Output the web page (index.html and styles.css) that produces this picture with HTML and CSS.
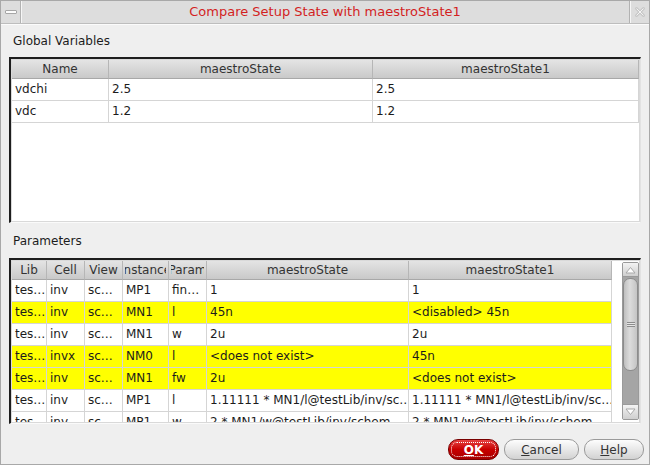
FILE: index.html
```html
<!DOCTYPE html>
<html>
<head>
<meta charset="utf-8">
<link rel="stylesheet" href="styles.css">
</head>
<body>
<div class="window">
  <div class="titlebar">
    <div class="tb-btn tb-min"><span class="min-icon"></span></div>
    <div class="tb-title">Compare Setup State with maestroState1</div>
    <div class="tb-btn tb-close">
      <svg width="12" height="12" viewBox="0 0 12 12"><path d="M2.5 2.5 L9.5 9.5 M9.5 2.5 L2.5 9.5" stroke="#c8c8c8" stroke-width="3" stroke-linecap="round" fill="none"/><path d="M2.5 2.5 L9.5 9.5 M9.5 2.5 L2.5 9.5" stroke="#f4f4f4" stroke-width="1" fill="none"/></svg>
    </div>
  </div>

  <div class="label label-1">Global Variables</div>
  <div class="frame">
    <div class="viewport">
      <div class="row">
        <div class="hc c-name"><div class="clip"><span>Name</span></div></div>
        <div class="hc c-ms"><div class="clip"><span>maestroState</span></div></div>
        <div class="hc c-ms1"><div class="clip"><span>maestroState1</span></div></div>
      </div>
      <div class="row">
        <div class="dc c-name">vdchi</div>
        <div class="dc c-ms">2.5</div>
        <div class="dc c-ms1">2.5</div>
      </div>
      <div class="row">
        <div class="dc c-name">vdc</div>
        <div class="dc c-ms">1.2</div>
        <div class="dc c-ms1">1.2</div>
      </div>
    </div>
  </div>

  <div class="label label-2">Parameters</div>
  <div class="frame">
    <div class="viewport split">
      <div class="grid-area">
        <div class="row">
          <div class="hc p-lib"><div class="clip"><span>Lib</span></div></div>
          <div class="hc p-cell"><div class="clip"><span>Cell</span></div></div>
          <div class="hc p-view"><div class="clip"><span>View</span></div></div>
          <div class="hc p-inst"><div class="clip"><span>Instance</span></div></div>
          <div class="hc p-param"><div class="clip"><span>Param</span></div></div>
          <div class="hc p-ms"><div class="clip"><span>maestroState</span></div></div>
          <div class="hc p-ms1"><div class="clip"><span>maestroState1</span></div></div>
        </div>
        <div class="row">
          <div class="dc p-lib">tes…</div><div class="dc p-cell">inv</div><div class="dc p-view">sc…</div><div class="dc p-inst">MP1</div><div class="dc p-param">fin…</div><div class="dc p-ms">1</div><div class="dc p-ms1">1</div>
        </div>
        <div class="row hl">
          <div class="dc p-lib">tes…</div><div class="dc p-cell">inv</div><div class="dc p-view">sc…</div><div class="dc p-inst">MN1</div><div class="dc p-param">l</div><div class="dc p-ms">45n</div><div class="dc p-ms1">&lt;disabled&gt; 45n</div>
        </div>
        <div class="row">
          <div class="dc p-lib">tes…</div><div class="dc p-cell">inv</div><div class="dc p-view">sc…</div><div class="dc p-inst">MN1</div><div class="dc p-param">w</div><div class="dc p-ms">2u</div><div class="dc p-ms1">2u</div>
        </div>
        <div class="row hl">
          <div class="dc p-lib">tes…</div><div class="dc p-cell">invx</div><div class="dc p-view">sc…</div><div class="dc p-inst">NM0</div><div class="dc p-param">l</div><div class="dc p-ms">&lt;does not exist&gt;</div><div class="dc p-ms1">45n</div>
        </div>
        <div class="row hl">
          <div class="dc p-lib">tes…</div><div class="dc p-cell">inv</div><div class="dc p-view">sc…</div><div class="dc p-inst">MN1</div><div class="dc p-param">fw</div><div class="dc p-ms">2u</div><div class="dc p-ms1">&lt;does not exist&gt;</div>
        </div>
        <div class="row">
          <div class="dc p-lib">tes…</div><div class="dc p-cell">inv</div><div class="dc p-view">sc…</div><div class="dc p-inst">MP1</div><div class="dc p-param">l</div><div class="dc p-ms">1.11111 * MN1/l@testLib/inv/sc…</div><div class="dc p-ms1">1.11111 * MN1/l@testLib/inv/sc…</div>
        </div>
        <div class="row">
          <div class="dc p-lib">tes…</div><div class="dc p-cell">inv</div><div class="dc p-view">sc…</div><div class="dc p-inst">MP1</div><div class="dc p-param">w</div><div class="dc p-ms">2 * MN1/w@testLib/inv/schem…</div><div class="dc p-ms1">2 * MN1/w@testLib/inv/schem…</div>
        </div>
      </div>
      <div class="sb-gap"></div>
      <div class="scrollbar">
        <div class="sb-btn sb-up"><svg width="11" height="8" viewBox="0 0 11 8"><path d="M1 7 L5.5 1.5 L10 7 Z" fill="#ffffff" stroke="#a8a8a8" stroke-width="1"/></svg></div>
        <div class="sb-track">
          <div class="sb-thumb"><span class="grip"></span></div>
        </div>
        <div class="sb-btn sb-down"><svg width="11" height="8" viewBox="0 0 11 8"><path d="M1 1 L5.5 6.5 L10 1 Z" fill="#ffffff" stroke="#a8a8a8" stroke-width="1"/></svg></div>
      </div>
    </div>
  </div>

  <div class="buttons">
    <button class="btn btn-ok"><span class="focus"><u>O</u>K</span></button>
    <button class="btn btn-cancel"><u>C</u>ancel</button>
    <button class="btn btn-help"><u>H</u>elp</button>
  </div>
</div>
</body>
</html>
```

FILE: styles.css
```css
* { box-sizing: border-box; }
html, body { margin: 0; padding: 0; }
body {
  width: 650px;
  height: 465px;
  overflow: hidden;
  background: #d8d8d8;
  font-family: "DejaVu Sans", sans-serif;
  font-size: 12px;
  color: #1c1c1c;
}
.window {
  width: 650px;
  height: 465px;
  border: 1px solid #a8a8a8;
  background: #efefef;
  display: flex;
  flex-direction: column;
}
.titlebar {
  flex: none;
  height: 23px;
  display: flex;
  background: #dddddd;
  border-bottom: 1px solid #bdbdbd;
  box-shadow: 0 1px 0 #fbfbfb;
}
.tb-btn {
  flex: none;
  width: 20px;
  display: flex;
  align-items: center;
  justify-content: center;
}
.tb-min {
  border-right: 1px solid #b2b2b2;
  box-shadow: 1px 0 0 #f6f6f6;
}
.tb-close {
  border-left: 1px solid #b2b2b2;
  box-shadow: inset 1px 0 0 #f6f6f6;
}
.min-icon {
  width: 12px;
  height: 4px;
  background: #fcfcfc;
  border: 1px solid #a6a6a6;
  border-radius: 1px;
}
.tb-title {
  flex: 1;
  text-align: center;
  color: #d31f1f;
  font-size: 13px;
  line-height: 22px;
}
.label {
  flex: none;
  padding-left: 12px;
}
.label-1 { height: 33px; padding-top: 2px; line-height: 31px; }
.label-2 { height: 35px; padding-top: 1px; line-height: 34px; }
.frame {
  flex: none;
  margin-left: 8px;
  width: 632px;
  height: 166px;
  border-top: 2px solid #1e1e1e;
  border-left: 2px solid #1e1e1e;
  border-right: 1px solid #e2e2e2;
  border-bottom: 1px solid #fafafa;
  padding: 1px;
  background: #d9d9d9;
}
.viewport {
  height: 100%;
  background: #ffffff;
  overflow: hidden;
}
.split { display: flex; }
.grid-area { flex: none; width: 600px; overflow: hidden; }
.sb-gap { flex: none; width: 10px; }
.row { display: flex; }
.hc {
  flex: none;
  height: 19px;
  padding: 0 2px;
  display: flex;
  border-right: 1px solid #b6b6b6;
  border-bottom: 1px solid #a8a8a8;
  background: linear-gradient(#e4e4e4, #c9c9c9);
  color: #333333;
}
.hc .clip {
  flex: 1;
  min-width: 0;
  overflow: hidden;
  display: flex;
  justify-content: center;
  align-items: center;
}
.hc .clip span { flex: none; white-space: nowrap; }
.dc {
  flex: none;
  height: 22px;
  line-height: 21px;
  padding-left: 3px;
  border-right: 1px solid #d5d5d5;
  border-bottom: 1px solid #d5d5d5;
  overflow: hidden;
  white-space: nowrap;
  background: #ffffff;
}
.row.hl .dc { background: #ffff00; }
.c-name { width: 97px; }
.c-ms { width: 264px; }
.c-ms1 { width: 266px; }
.p-lib { width: 35px; }
.p-cell { width: 38px; }
.p-view { width: 38px; }
.p-inst { width: 46px; }
.p-param { width: 38px; }
.p-ms { width: 202px; }
.p-ms1 { width: 203px; }
.scrollbar {
  flex: none;
  width: 17px;
  height: 158px;
  margin-top: 1px;
  display: flex;
  flex-direction: column;
  background: #a5a5a5;
  border: 1px solid #9a9a9a;
  border-radius: 2px;
}
.sb-btn {
  flex: none;
  display: flex;
  align-items: center;
  justify-content: center;
  background: linear-gradient(#f3f3f3, #cfcfcf);
}
.sb-up { height: 14px; border-bottom: 1px solid #9a9a9a; }
.sb-down { height: 15px; border-top: 1px solid #9a9a9a; }
.sb-track { flex: 1; padding: 1px 0 0; }
.sb-thumb {
  height: 93px;
  border-radius: 7px;
  border: 1px solid #8c8c8c;
  background: linear-gradient(90deg, #bfbfbf, #dcdcdc 45%, #c4c4c4);
  display: flex;
  align-items: center;
  justify-content: center;
}
.grip {
  width: 8px;
  height: 5px;
  background: repeating-linear-gradient(#8c8c8c 0 1px, #e6e6e6 1px 2px);
}
.buttons {
  flex: 1;
  display: flex;
  justify-content: flex-end;
  align-items: flex-start;
  gap: 5px;
  padding: 15px 5px 0 0;
}
.btn {
  height: 21px;
  padding: 0;
  border-radius: 10px;
  border: 1px solid #9a9a9a;
  background: linear-gradient(#fdfdfd, #e8e8e8 50%, #d2d2d2);
  color: #333333;
  font-family: "DejaVu Sans", sans-serif;
  font-size: 12px;
  display: flex;
  align-items: center;
  justify-content: center;
}
.btn-ok {
  width: 51px;
  background: linear-gradient(#e64242, #c80000 50%, #a60000);
  border-color: #780000;
  color: #ffffff;
  font-weight: bold;
}
.btn-ok .focus {
  width: 45px;
  height: 15px;
  border: 1px dotted #ffffff;
  border-radius: 6px;
  display: flex;
  align-items: center;
  justify-content: center;
}
.btn-cancel { width: 75px; }
.btn-help { width: 60px; }
```
